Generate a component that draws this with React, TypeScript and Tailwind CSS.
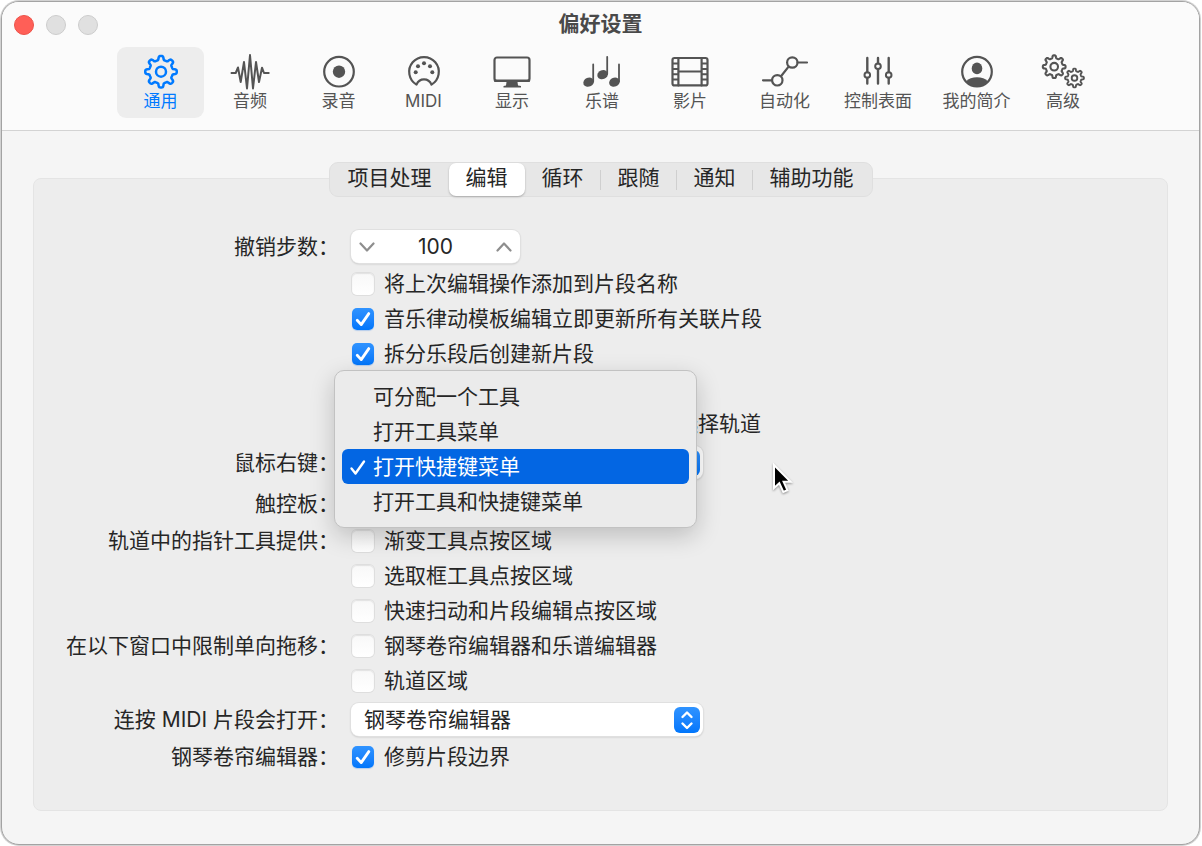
import { useId, useState, type ReactNode } from "react";
import clsx from "clsx";

const FONT = "font-[Inter,'Noto_Sans_CJK_SC',sans-serif]";

const MENU_OPTIONS = [
  "可分配一个工具",
  "打开工具菜单",
  "打开快捷键菜单",
  "打开工具和快捷键菜单",
];

const TABS = ["项目处理", "编辑", "循环", "跟随", "通知", "辅助功能"];

// Closed outline of a gear with rounded teeth, first tooth pointing up
function gearPath(cx: number, cy: number, outer: number, depth: number) {
  const steps = 192;
  const points: string[] = [];
  for (let i = 0; i < steps; i++) {
    const t = (i / steps) * Math.PI * 2;
    const wave = Math.tanh(2.6 * (Math.cos(8 * t) - 0.15));
    const r = outer - depth / 2 + (depth / 2) * wave;
    points.push(
      `${(cx + r * Math.sin(t)).toFixed(2)} ${(cy - r * Math.cos(t)).toFixed(2)}`,
    );
  }
  return `M${points.join("L")}Z`;
}

function Icon({ width, children }: { width: number; children: ReactNode }) {
  return (
    <svg
      width={width}
      height={34}
      viewBox={`0 0 ${width} 34`}
      fill="none"
      stroke="currentColor"
      strokeWidth={2.2}
      strokeLinecap="round"
      strokeLinejoin="round"
      className="overflow-visible"
      aria-hidden="true"
    >
      {children}
    </svg>
  );
}

const TOOLBAR = [
  {
    label: "通用",
    size: "w-[87px]",
    icon: (
      <Icon width={34}>
        <path d={gearPath(17, 16.7, 15.8, 4)} strokeWidth={2.5} />
        <circle cx="17" cy="16.7" r="5" strokeWidth={2.5} />
      </Icon>
    ),
  },
  {
    label: "音频",
    size: "w-[88px]",
    icon: (
      <Icon width={40}>
        <path
          d="M1.5 18H5.7L8 12.5L10.7 27L14 7L17 33.5L20 0L23 33.5L26 7L29 27L32 12.7L34 18H38.7"
          strokeWidth={2}
        />
      </Icon>
    ),
  },
  {
    label: "录音",
    size: "w-[85px]",
    icon: (
      <Icon width={34}>
        <circle cx="17" cy="16.7" r="14.8" />
        <circle cx="17" cy="16.7" r="6.2" fill="currentColor" stroke="none" />
      </Icon>
    ),
  },
  {
    label: "MIDI",
    size: "w-[81px]",
    icon: (
      <Icon width={34}>
        <path d="M9.5 29.6A14.8 14.8 0 1 1 24.5 29.6C23 26 20.5 24.3 17 24.3S11 26 9.5 29.6Z" />
        <g fill="currentColor" stroke="none">
          <circle cx="17" cy="8.2" r="2" />
          <circle cx="11" cy="11.3" r="2" />
          <circle cx="23" cy="11.3" r="2" />
          <circle cx="8.7" cy="17.2" r="2" />
          <circle cx="25.3" cy="17.2" r="2" />
        </g>
      </Icon>
    ),
  },
  {
    label: "显示",
    size: "w-[92px]",
    icon: (
      <Icon width={38}>
        <rect x="1.5" y="2.5" width="35" height="23.5" rx="2.5" />
        <path d="M2 25.8H36" strokeWidth={2.4} />
        <path
          d="M13.5 27H24.5L25 30.5L28 31V32.4H10.5V31L13 30.5Z"
          fill="currentColor"
          stroke="none"
        />
      </Icon>
    ),
  },
  {
    label: "乐谱",
    size: "w-[84px]",
    icon: (
      <Icon width={38}>
        <g fill="currentColor" stroke="none">
          <ellipse cx="5.6" cy="27.2" rx="5.4" ry="4.5" transform="rotate(-22 5.6 27.2)" />
          <ellipse cx="19.6" cy="19.7" rx="5.4" ry="4.5" transform="rotate(-22 19.6 19.7)" />
          <ellipse cx="31.4" cy="27.2" rx="5.4" ry="4.5" transform="rotate(-22 31.4 27.2)" />
        </g>
        <path d="M10.2 9.5V26.5M24.2 1.8V19M36 9.5V26.5" strokeWidth={1.8} />
      </Icon>
    ),
  },
  {
    label: "影片",
    size: "w-[88px]",
    icon: (
      <Icon width={38}>
        <rect x="1.5" y="3" width="35" height="27.4" rx="2" />
        <path d="M7.4 3V30.4M30.6 3V30.4M7.4 16.5H30.6" />
        <path
          d="M2 8.6H7M2 13.9H7M2 19.2H7M2 24.6H7M31 8.6H36M31 13.9H36M31 19.2H36M31 24.6H36"
          strokeWidth={2}
        />
      </Icon>
    ),
  },
  {
    label: "自动化",
    size: "w-[97px]",
    icon: (
      <Icon width={46}>
        <circle cx="15.3" cy="25.3" r="5.2" />
        <circle cx="30.3" cy="7.5" r="5.2" />
        <path d="M1 25.3H10M19 21.2L26.6 11.6M35.6 7.5H45" />
      </Icon>
    ),
  },
  {
    label: "控制表面",
    size: "w-[86px]",
    icon: (
      <Icon width={28}>
        <path
          d="M3.3 3V17M3.3 23V28.5M14 3V8.3M14 14.3V28.5M24.7 3V17M24.7 23V28.5"
          strokeWidth={2.4}
        />
        <circle cx="3.3" cy="20" r="2.8" strokeWidth={2} />
        <circle cx="14" cy="11.3" r="2.8" strokeWidth={2} />
        <circle cx="24.7" cy="20" r="2.8" strokeWidth={2} />
      </Icon>
    ),
  },
  {
    label: "我的简介",
    size: "w-[107px]",
    icon: (
      <Icon width={34}>
        <circle cx="17" cy="16.7" r="14.8" />
        <ellipse cx="17" cy="13.4" rx="5.3" ry="5.8" fill="currentColor" stroke="none" />
        <path
          d="M6 26.6C8.5 23.6 12.5 22.3 17 22.3S25.5 23.6 28 26.6A15 15 0 0 1 6 26.6Z"
          fill="currentColor"
          stroke="none"
        />
      </Icon>
    ),
  },
  {
    label: "高级",
    size: "w-[62px]",
    icon: (
      <Icon width={43}>
        <path d={gearPath(12.2, 11.7, 11.4, 2.9)} strokeWidth={2.1} />
        <circle cx="12.2" cy="11.7" r="3.8" strokeWidth={2.1} />
        <path d={gearPath(32.5, 23, 9.4, 2.5)} strokeWidth={1.9} />
        <circle cx="32.5" cy="23" r="2.8" strokeWidth={1.9} />
      </Icon>
    ),
  },
];

function Row({
  label,
  htmlFor,
  kind = "check",
  children,
}: {
  label?: string;
  htmlFor?: string;
  kind?: "stepper" | "select" | "check";
  children?: ReactNode;
}) {
  return (
    <div
      className={clsx(
        "grid grid-cols-[305px_1fr] items-center gap-3",
        kind === "stepper" && "pb-[3px]",
        kind === "select" && "pt-[5px] pb-[3px]",
        kind === "check" && "h-[35px]",
      )}
    >
      <label htmlFor={htmlFor} className="text-right whitespace-nowrap">
        {label}
      </label>
      <div className="relative flex items-center">{children}</div>
    </div>
  );
}

function Check({ label, on = false }: { label: string; on?: boolean }) {
  const id = useId();
  const [checked, setChecked] = useState(on);
  return (
    <div className="flex items-center gap-[10px] pl-px">
      <span className="relative size-[22px]">
        <input
          id={id}
          type="checkbox"
          checked={checked}
          onChange={() => setChecked(!checked)}
          className="block size-[22px] appearance-none rounded-[5px] bg-gradient-to-b from-[#f8f8f8] to-white shadow-[0_0_0_1px_#dedede,inset_0_1px_1px_#e2e2e2] checked:from-[#2f93ff] checked:to-[#0076fb] checked:shadow-[0_1px_1px_#b5cdec]"
        />
        {checked && (
          <svg
            viewBox="0 0 22 22"
            className="pointer-events-none absolute inset-0 size-[22px]"
            fill="none"
            stroke="white"
            strokeWidth={2.8}
            strokeLinecap="round"
            strokeLinejoin="round"
          >
            <path d="M5.2 12.2L9.2 16.6L16.8 5.6" />
          </svg>
        )}
      </span>
      <label htmlFor={id} className="whitespace-nowrap">
        {label}
      </label>
    </div>
  );
}

function Popup({ id, options }: { id: string; options: string[] }) {
  return (
    <div className="relative w-[352px]">
      <select
        id={id}
        className="block h-[33px] w-full appearance-none rounded-lg bg-white pr-10 pl-[13px] shadow-[0_0_0_1px_#e0e0e0,0_1px_2px_#b5b5b5]"
      >
        {options.map((o) => (
          <option key={o}>{o}</option>
        ))}
      </select>
      <span className="pointer-events-none absolute top-[4px] right-[3px] flex size-[26px] items-center justify-center rounded-md bg-gradient-to-b from-[#2f93ff] to-[#0076fb]">
        <svg
          viewBox="0 0 26 26"
          className="size-[26px]"
          fill="none"
          stroke="white"
          strokeWidth={2.4}
          strokeLinecap="round"
          strokeLinejoin="round"
        >
          <path d="M8.5 10L13 5.5L17.5 10M8.5 16.5L13 21L17.5 16.5" />
        </svg>
      </span>
    </div>
  );
}

function Stepper() {
  const [value, setValue] = useState(100);
  return (
    <div className="flex h-[33px] w-[169px] items-center justify-between rounded-lg bg-white px-1 shadow-[0_0_0_1px_#e0e0e0,0_1px_2px_#b5b5b5]">
      <button
        type="button"
        aria-label="减少"
        onClick={() => setValue(value - 1)}
        className="flex size-6 items-center justify-center text-[#8e8e8e]"
      >
        <svg width="16" height="16" fill="none" stroke="currentColor" strokeWidth={2.2} strokeLinecap="round" strokeLinejoin="round">
          <path d="M1.5 4.5L8 11.5L14.5 4.5" />
        </svg>
      </button>
      <input
        id="undo"
        value={value}
        onChange={(e) => setValue(Number(e.target.value) || 0)}
        className="w-20 bg-transparent text-center"
      />
      <button
        type="button"
        aria-label="增加"
        onClick={() => setValue(value + 1)}
        className="flex size-6 items-center justify-center text-[#8e8e8e]"
      >
        <svg width="16" height="16" fill="none" stroke="currentColor" strokeWidth={2.2} strokeLinecap="round" strokeLinejoin="round">
          <path d="M1.5 11.5L8 4.5L14.5 11.5" />
        </svg>
      </button>
    </div>
  );
}

function OpenMenu() {
  const [selected, setSelected] = useState(MENU_OPTIONS[2]);
  return (
    <div
      role="menu"
      className="absolute -top-[76px] -left-[17px] z-10 w-[363px] rounded-[10px] border border-[#c2c2c2] bg-[#ebebeb] px-[7px] pt-2 pb-2 shadow-[0_8px_24px_rgba(0,0,0,0.2)]"
    >
      {MENU_OPTIONS.map((o) => (
        <button
          key={o}
          type="button"
          role="menuitemradio"
          aria-checked={o === selected}
          onClick={() => setSelected(o)}
          className={clsx(
            "flex h-[35px] w-full items-center rounded-md pt-px text-left",
            o === selected && "bg-[#0366e3] text-white",
          )}
        >
          <span className="flex w-[31px] justify-center">
            {o === selected && (
              <svg width="18" height="18" fill="none" stroke="currentColor" strokeWidth={2.4} strokeLinecap="round" strokeLinejoin="round">
                <path d="M2.5 10.5L6.5 15.5L15 3.5" />
              </svg>
            )}
          </span>
          {o}
        </button>
      ))}
    </div>
  );
}

function Pointer() {
  return (
    <svg
      width="22"
      height="32"
      viewBox="0 0 22 32"
      className="absolute top-[17px] left-[421px] drop-shadow-[0_1px_1px_rgba(0,0,0,0.4)]"
      aria-hidden="true"
    >
      <path
        d="M2 2V25L7.3 20.2L11.3 29L15.4 27.2L11.6 18.7H18.6Z"
        fill="black"
        stroke="white"
        strokeWidth={2}
      />
    </svg>
  );
}

export default function App() {
  const [tool, setTool] = useState("通用");
  const [tab, setTab] = useState("编辑");

  return (
    <div className={clsx(FONT, "flex min-h-screen bg-white p-px pr-[2px] text-[21px] leading-[30px] text-[#262626]")}>
      <div className="flex flex-1 flex-col overflow-hidden rounded-[18px] border border-[#a3a3a3] bg-[#f5f5f5] shadow-[0_0_0_1px_#d2d2d2]">
        <header className="border-b border-[#d3d3d3] bg-[#fbfbfb] pb-3">
          {/* Title bar */}
          <div className="grid h-[45px] grid-cols-[1fr_auto_1fr] items-center px-3">
            <div className="flex gap-3">
              <button type="button" aria-label="关闭" className="size-5 rounded-full border border-[#ec5249] bg-[#ff5f57]" />
              <button type="button" aria-label="最小化" className="size-5 rounded-full border border-[#cccccc] bg-[#e0e0e0]" />
              <button type="button" aria-label="缩放" className="size-5 rounded-full border border-[#cccccc] bg-[#e0e0e0]" />
            </div>
            <h1 className="pb-[2px] font-bold text-[#4a4a4a]">偏好设置</h1>
          </div>

          {/* Toolbar */}
          <nav className="flex justify-center gap-[2px] pl-[10px] text-[17px] leading-6">
            {TOOLBAR.map((item) => (
              <button
                key={item.label}
                type="button"
                onClick={() => setTool(item.label)}
                className={clsx(
                  "flex h-[71px] flex-col items-center rounded-[9px] pt-2 whitespace-nowrap",
                  item.size,
                  item.label === tool
                    ? "bg-[#ededed] text-[#007aff]"
                    : "text-[#545454]",
                )}
              >
                {item.icon}
                {item.label}
              </button>
            ))}
          </nav>
        </header>

        <main className="flex flex-col px-[31px] pt-[31px] pb-8">
          {/* Tabs */}
          <div
            role="tablist"
            className="z-10 flex h-[35px] self-center rounded-[9px] border border-[#dfdfdf] bg-[#e7e7e7] px-px"
          >
            {TABS.map((t, i) => (
              <button
                key={t}
                type="button"
                role="tab"
                aria-selected={t === tab}
                onClick={() => setTab(t)}
                className={clsx(
                  "relative flex items-center rounded-[7px] px-[17px] pb-[3px]",
                  t === tab && "bg-white shadow-[0_1px_2px_#a8a8a8]",
                )}
              >
                {t}
                {i < TABS.length - 1 && t !== tab && TABS[i + 1] !== tab && (
                  <span className="absolute top-[7px] right-0 h-5 w-px bg-[#cfcfcf]" />
                )}
              </button>
            ))}
          </div>

          {/* Editing panel */}
          <section className="-mt-[19px] rounded-lg border border-[#e4e4e4] bg-[#ededed] pt-[51px] pb-[36px]">
            <Row kind="stepper" label="撤销步数：" htmlFor="undo">
              <Stepper />
            </Row>
            <Row>
              <Check label="将上次编辑操作添加到片段名称" />
            </Row>
            <Row>
              <Check label="音乐律动模板编辑立即更新所有关联片段" on />
            </Row>
            <Row>
              <Check label="拆分乐段后创建新片段" on />
            </Row>
            <Row />
            <Row>
              <span className="pl-[326px]">选择轨道</span>
            </Row>
            <Row kind="select" label="鼠标右键：" htmlFor="right-button">
              <Popup id="right-button" options={["打开快捷键菜单"]} />
              <OpenMenu />
              <Pointer />
            </Row>
            <Row kind="select" label="触控板：">
              <div className="h-[33px]" />
            </Row>
            <Row label="轨道中的指针工具提供：">
              <Check label="渐变工具点按区域" />
            </Row>
            <Row>
              <Check label="选取框工具点按区域" />
            </Row>
            <Row>
              <Check label="快速扫动和片段编辑点按区域" />
            </Row>
            <Row label="在以下窗口中限制单向拖移：">
              <Check label="钢琴卷帘编辑器和乐谱编辑器" />
            </Row>
            <Row>
              <Check label="轨道区域" />
            </Row>
            <Row kind="select" label="连按 MIDI 片段会打开：" htmlFor="double-click">
              <Popup id="double-click" options={["钢琴卷帘编辑器"]} />
            </Row>
            <Row label="钢琴卷帘编辑器：">
              <Check label="修剪片段边界" on />
            </Row>
          </section>
        </main>
      </div>
    </div>
  );
}
